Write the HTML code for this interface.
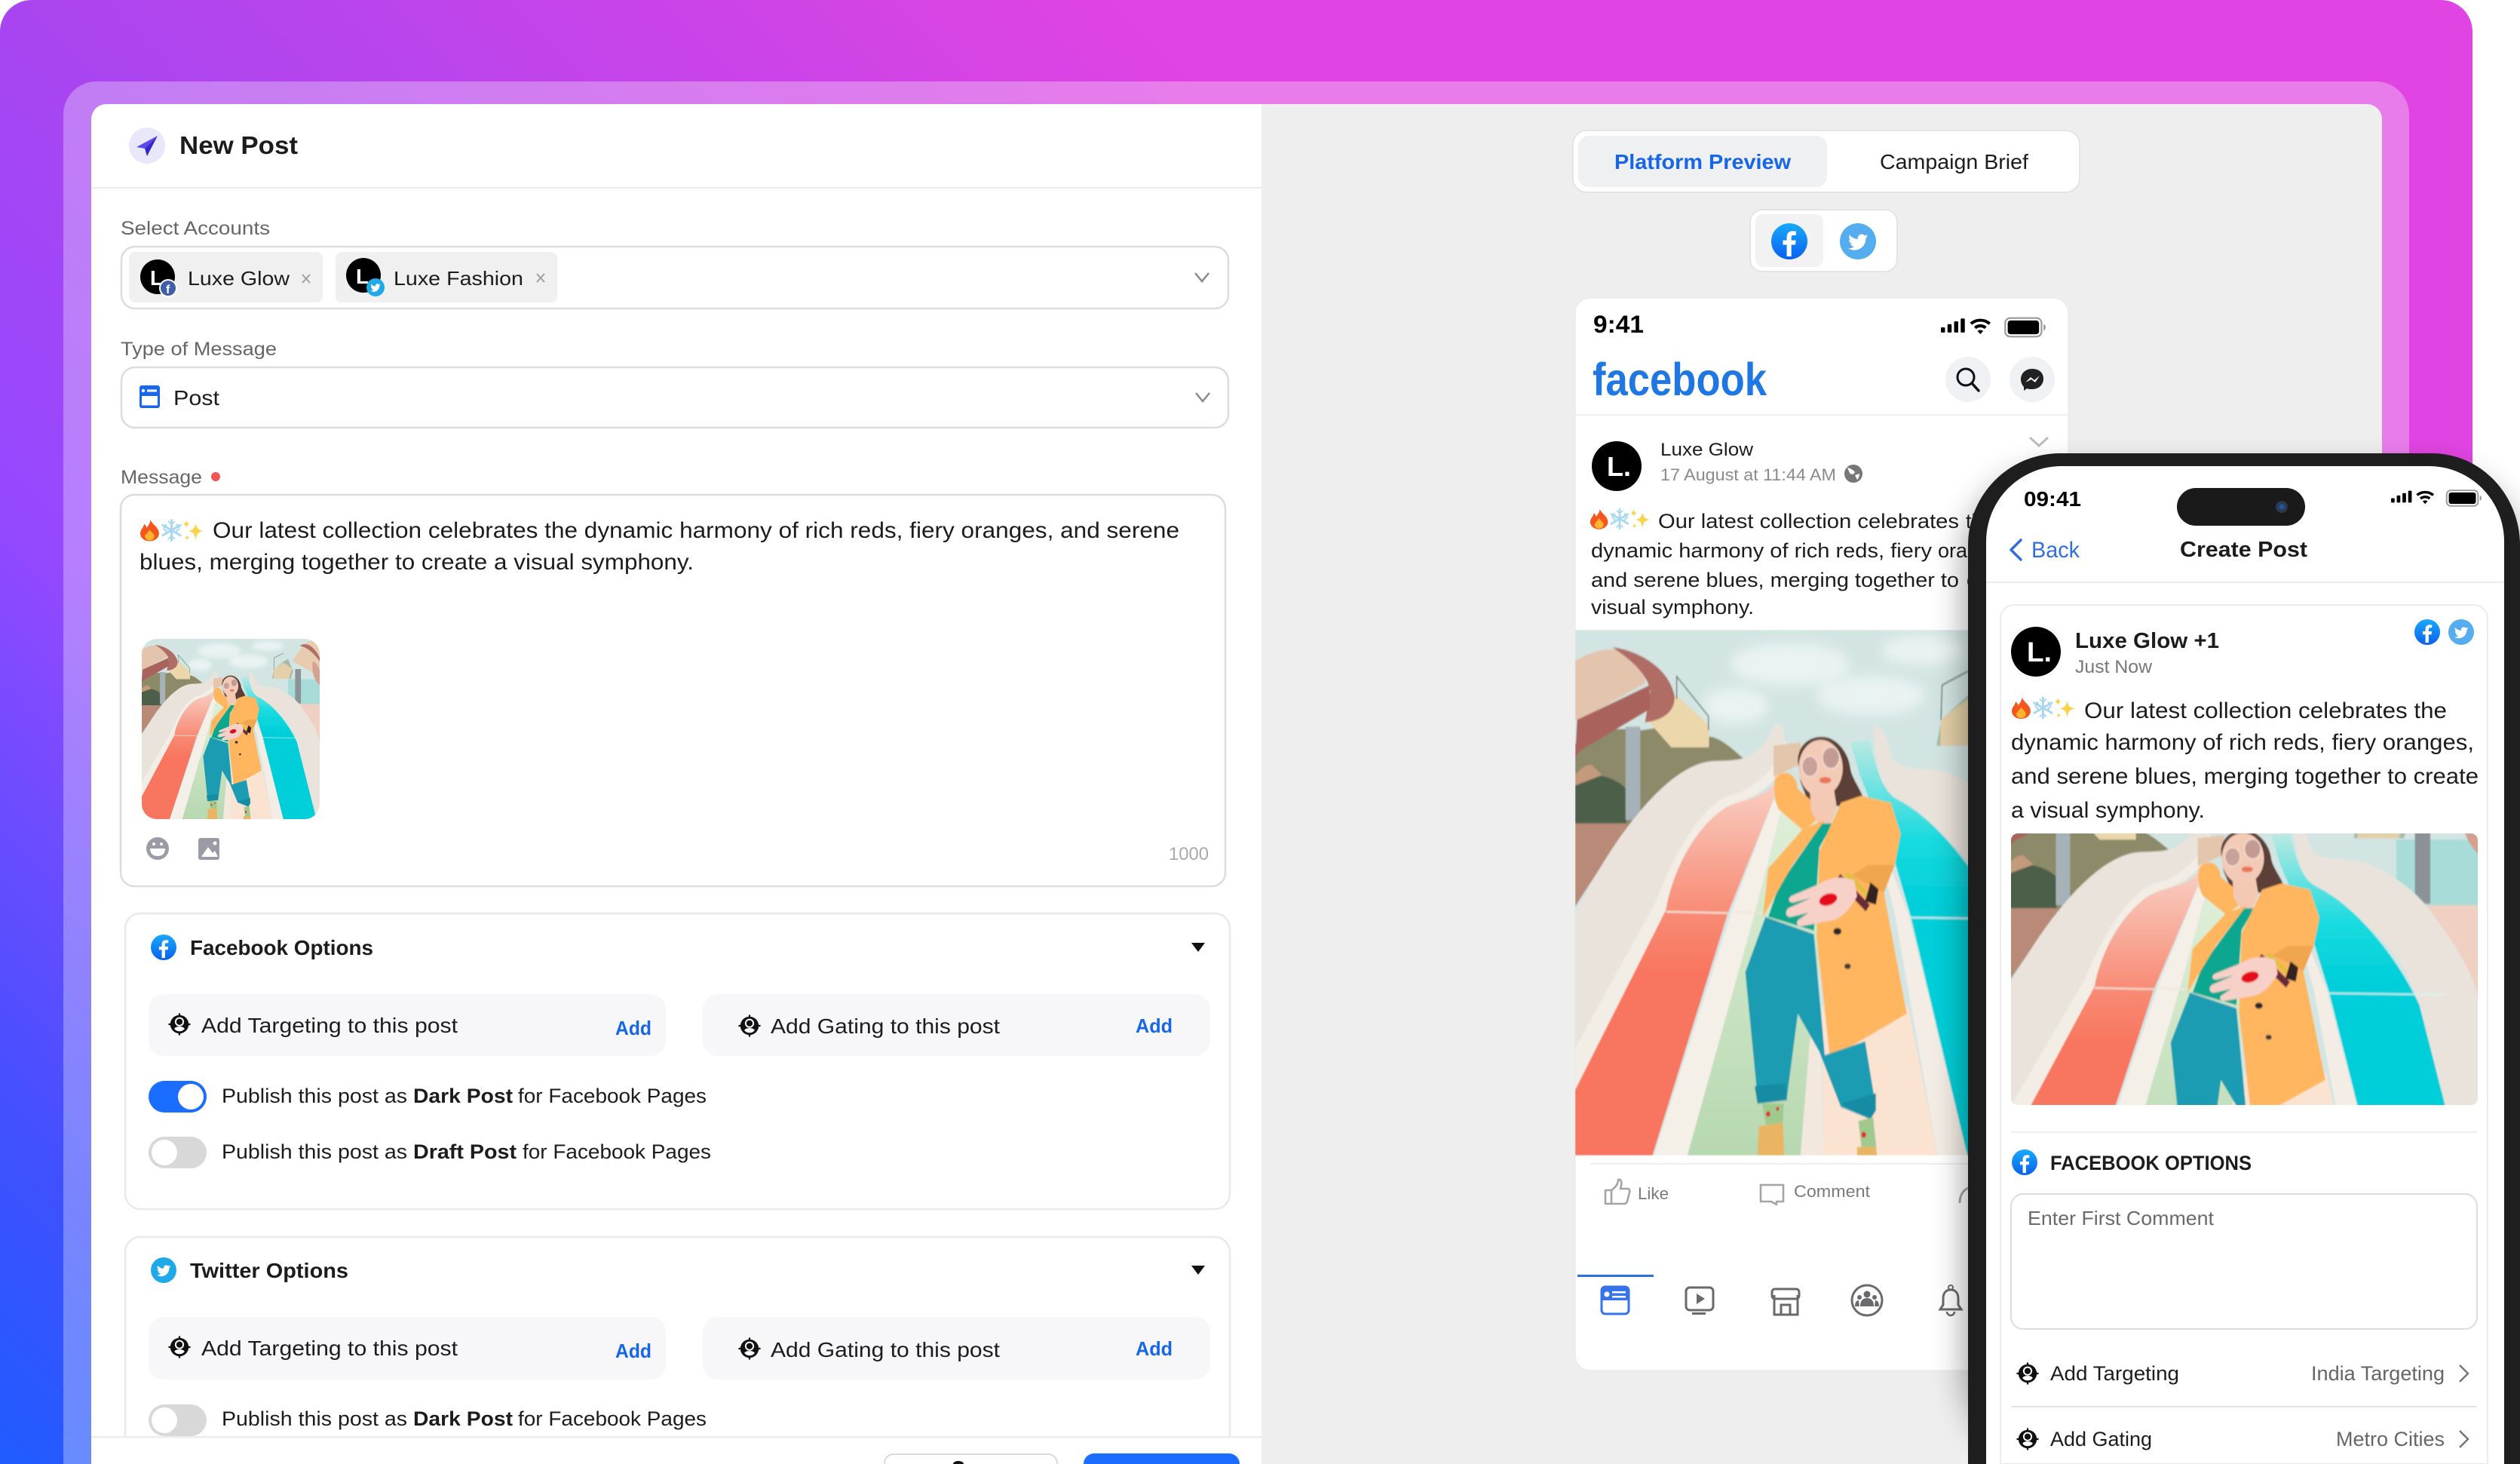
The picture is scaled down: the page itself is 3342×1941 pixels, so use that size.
<!DOCTYPE html>
<html><head><meta charset="utf-8"><title>New Post</title>
<style>html,body{margin:0;padding:0;background:#fff;width:3342px;height:1941px;overflow:hidden}svg{display:block}text{font-family:"Liberation Sans",sans-serif;fill:#1c1c1c;white-space:pre}.b{font-weight:700}</style></head>
<body>
<svg xmlns="http://www.w3.org/2000/svg" width="3342" height="1941" viewBox="0 0 3342 1941">
<defs>
<linearGradient id="bg" gradientUnits="userSpaceOnUse" x1="0" y1="1941" x2="1845" y2="96"><stop offset="0" stop-color="#1f5cff"/><stop offset=".12" stop-color="#3f50ff"/><stop offset=".35" stop-color="#9648ff"/><stop offset=".53" stop-color="#a945f0"/><stop offset=".93" stop-color="#e044e2"/><stop offset="1" stop-color="#e044e2"/></linearGradient>
<linearGradient id="fbg" x1="0" y1="0" x2="0" y2="1"><stop offset="0" stop-color="#19aafc"/><stop offset="1" stop-color="#0a60ee"/></linearGradient>
<linearGradient id="red" gradientUnits="userSpaceOnUse" x1="0" y1="450" x2="0" y2="1000"><stop offset="0" stop-color="#f8cfc3"/><stop offset=".7" stop-color="#f88a74"/><stop offset="1" stop-color="#f8765f"/></linearGradient>
<linearGradient id="blu" gradientUnits="userSpaceOnUse" x1="0" y1="340" x2="0" y2="800"><stop offset="0" stop-color="#b5e8e2"/><stop offset=".6" stop-color="#18dbe0"/><stop offset="1" stop-color="#00cfd9"/></linearGradient>
<linearGradient id="grn" x1="0" y1="0" x2="0" y2="1"><stop offset="0" stop-color="#dff0d8"/><stop offset="1" stop-color="#b7d8b0"/></linearGradient>
<filter id="bl" x="-30%" y="-30%" width="160%" height="160%"><feGaussianBlur stdDeviation="22"/></filter>
<filter id="cl" x="-50%" y="-50%" width="200%" height="200%"><feGaussianBlur stdDeviation="18"/></filter>
<filter id="sf" x="0" y="0" width="100%" height="100%"><feGaussianBlur stdDeviation="2.500"/></filter>
<clipPath id="pc"><rect x="121" y="138" width="3038" height="1803" rx="20"/></clipPath>
<clipPath id="lc"><rect x="121" y="138" width="1552" height="1766"/></clipPath>
<clipPath id="fc"><rect x="2089" y="395" width="654" height="1422" rx="20"/></clipPath>
<clipPath id="th"><rect x="188" y="847" width="236" height="239" rx="20"/></clipPath>
<clipPath id="pi"><rect x="2667" y="1105" width="619" height="360" rx="9"/></clipPath>

<symbol id="fb" viewBox="0 0 24 24"><circle cx="12" cy="12" r="12" fill="url(#fbg)"/><g transform="translate(1.2 2.200) scale(.9)"><path fill="#fff" d="M13.5 22v-8.600h2.900l.43-3.300H13.500V8c0-.95.27-1.600 1.640-1.600h1.750V3.450c-.3-.04-1.340-.13-2.550-.13-2.520 0-4.250 1.540-4.250 4.370v2.410H7.240v3.300h2.850V22z"/></g></symbol>
<symbol id="tw" viewBox="0 0 24 24"><circle cx="12" cy="12" r="12" fill="#1fa9e8"/><g transform="translate(4.6 4.8) scale(.62)"><path fill="#fff" d="M22.46 6c-.77.35-1.6.58-2.46.69.88-.53 1.56-1.37 1.88-2.38-.83.5-1.75.85-2.72 1.05C18.37 4.5 17.26 4 16 4c-2.35 0-4.27 1.92-4.27 4.29 0 .34.04.67.11.98C8.28 9.09 5.11 7.38 3 4.79c-.37.63-.58 1.37-.58 2.15 0 1.49.75 2.81 1.91 3.56-.71 0-1.37-.2-1.95-.5v.03c0 2.08 1.48 3.82 3.44 4.21a4.22 4.22 0 0 1-1.93.07 4.28 4.28 0 0 0 4 2.98 8.521 8.521 0 0 1-5.33 1.84c-.34 0-.68-.02-1.02-.06C3.44 20.29 5.7 21 8.12 21 16 21 20.33 14.46 20.33 8.79c0-.19 0-.37-.01-.56.84-.6 1.56-1.36 2.14-2.23z"/></g></symbol>
<symbol id="tw2" viewBox="0 0 24 24"><circle cx="12" cy="12" r="12" fill="#55acee"/><g transform="translate(4.6 4.8) scale(.62)"><path fill="#fff" d="M22.46 6c-.77.35-1.6.58-2.46.69.88-.53 1.56-1.37 1.88-2.38-.83.5-1.75.85-2.72 1.05C18.37 4.5 17.26 4 16 4c-2.35 0-4.27 1.92-4.27 4.29 0 .34.04.67.11.98C8.28 9.09 5.11 7.38 3 4.79c-.37.63-.58 1.37-.58 2.15 0 1.49.75 2.81 1.91 3.56-.71 0-1.37-.2-1.95-.5v.03c0 2.08 1.48 3.82 3.44 4.21a4.22 4.22 0 0 1-1.93.07 4.28 4.28 0 0 0 4 2.98 8.521 8.521 0 0 1-5.33 1.84c-.34 0-.68-.02-1.02-.06C3.44 20.29 5.7 21 8.12 21 16 21 20.33 14.46 20.33 8.79c0-.19 0-.37-.01-.56.84-.6 1.56-1.36 2.14-2.23z"/></g></symbol>
<symbol id="tgt" viewBox="0 0 32 32"><circle cx="16" cy="16" r="13" fill="#111"/><rect x="14.8" y="0.5" width="2.400" height="4" fill="#111"/><rect x="14.8" y="27.5" width="2.400" height="4" fill="#111"/><rect x="0.5" y="14.8" width="4" height="2.400" fill="#111"/><rect x="27.5" y="14.8" width="4" height="2.400" fill="#111"/><circle cx="16" cy="12.500" r="6.500" fill="#fff"/><circle cx="16" cy="12.500" r="4.400" fill="#111"/><path fill="#fff" d="M8.600 22.200C10.500 19.900 13 19.300 16 19.300s5.500.6 7.400 2.900C21.500 24.600 19 25.900 16 25.900s-5.500-1.300-7.400-3.700z"/></symbol>
<symbol id="emo" viewBox="0 0 84 28">
<path fill="#f4561d" d="M14 0c1 6 11 10 11 18 0 6-5.500 10-12 10S1 24 1 18c0-5 4-7 5-12 2 2 3 3 3 5 2-3 5-6 5-11z"/><path fill="#fdb52e" d="M13 13c1 3 6 5 6 9 0 3-2.500 5-6 5s-6-2-6-5c0-3 4-5 6-9z"/>
<g stroke="#a9d7f0" stroke-width="2.800" stroke-linecap="round" fill="none"><path d="M41 1v26M29.700 7.500l22.600 13M29.700 20.500l22.600-13"/><path d="M37 3l4 3.500 4-3.500M37 25l4-3.500 4 3.500M31 13l3.500 1-1 4.500M51 13l-3.500 1 1 4.500M31 11l3.500-1-1-3.500M51 11l-3.500-1 1-3.500" stroke-width="1.800"/></g>
<g fill="#fbd24a"><path d="M72 5c1 6 3 9 10 10-7 1-9 4-10 12-1-8-3-11-10-12 7-1 9-4 10-10z"/><path d="M60 1c.5 3 1.500 4 4 5-2.500 1-3.500 2-4 5-.5-3-1.500-4-4-5 2.500-1 3.500-2 4-5z"/><path d="M61 20c.4 2 1 3 3 3.500-2 .5-2.600 1.500-3 3.500-.4-2-1-3-3-3.500 2-.5 2.600-1.500 3-3.500z"/></g>
</symbol>
<symbol id="sig" viewBox="0 0 128 30" preserveAspectRatio="none"><g fill="#000"><rect x="0" y="15" width="5" height="6.500" rx="1.200"/><rect x="8" y="11" width="5" height="10.500" rx="1.200"/><rect x="16" y="7.500" width="5" height="14" rx="1.200"/><rect x="24" y="4" width="5" height="17.500" rx="1.200"/><g transform="translate(34.800 -1.300) scale(.93)"><path d="M14 6C8.500 6 4 8 .5 11.200l2.600 3C6 11.700 9.700 10 14 10s8 1.700 10.900 4.200l2.600-3C24 8 19.500 6 14 6zM14 13.500c-3.300 0-6.200 1.200-8.300 3.200l2.700 3c1.500-1.300 3.400-2.100 5.600-2.100s4.100.8 5.600 2.100l2.700-3c-2.100-2-5-3.200-8.300-3.200zM14 21c-1.500 0-2.800.6-3.700 1.500l3.700 4.100 3.700-4.100c-.9-.9-2.200-1.500-3.700-1.500z"/></g><rect x="78" y="3.500" width="44" height="23" rx="6" fill="#fff" stroke="#999" stroke-width="2"/><rect x="81" y="6.500" width="38" height="17" rx="3.500"/><path d="M124.500 11c1.500.5 2.500 2 2.500 4s-1 3.500-2.500 4z" fill="#999"/></g></symbol>

<g id="scene"><g filter="url(#sf)">
<rect x="53" y="10" width="1832" height="1520" fill="#d3e5e3"/>
<g filter="url(#cl)" fill="#eef6f4" opacity=".85"><ellipse cx="850" cy="110" rx="220" ry="60"/><ellipse cx="1150" cy="200" rx="200" ry="55"/><ellipse cx="650" cy="230" rx="120" ry="50"/><ellipse cx="1350" cy="70" rx="160" ry="40"/></g>
<path fill="#8c8a68" d="M53 340C120 300 220 290 300 300c90-10 170-20 230 20 50-10 100 30 160 70L420 560 240 600H53z"/>
<path fill="#4c5f48" d="M53 440c60-20 140-10 190 30v100H53z"/>
<path fill="#c49a7c" d="M53 430c20-20 40-30 60-30l40 30-100 30z"/>
<path fill="#b98a78" d="M53 570h200l-200 240z"/>
<rect x="240" y="290" width="55" height="270" fill="#a7b1b8"/>
<path fill="#ecd7ad" d="M320 270l110-70 120 85v65H410z"/>
<path fill="#e3c5ae" d="M53 100c80-40 170-45 240-10 20 20 20 60 20 75L70 270H53z"/>
<path fill="#b06d66" d="M190 60c100 10 210 60 232 140 4 40-30 70-110 78l20-90c-10-50-70-90-142-128z"/>
<path fill="#a9635c" d="M60 270l270-100v70L70 360l-17 20z"/>
<path fill="none" stroke="#5a7a6a" stroke-width="4" d="M430 210V145l118 115v40"/>
<path fill="#a9bba6" d="M1395 345l18-75 99-70 48-20 50 100-20 65z"/>
<path fill="#e4d0a8" d="M1410 270l100-60 90 50-30 85h-160z"/>
<path fill="none" stroke="#5a6a6a" stroke-width="4" d="M1412 270l4-100 96-40"/>
<path fill="#a8dcd8" d="M1560 350h325v240h-325z"/>
<path fill="#e9ccb0" d="M1605 200c60-90 130-170 200-175 50 0 80 10 80 30v280c-70-40-190-100-280-135z"/>
<path fill="#b07068" d="M1700 60c70-20 140 30 185 110v30c-60-70-130-120-205-130z"/>
<rect x="1632" y="265" width="60" height="290" fill="#8b9398"/>
<path fill="#d4a090" d="M1815 200c30 10 60 40 70 80v120c-50-30-90-110-70-200z"/>
<path fill="#f0d0c2" d="M1640 560h245v360l-120-150z"/>
<path fill="#e9e3db" d="M53 830C200 600 400 400 560 390c90-5 170 10 230-100 20-20 40 0 40 40-30 90-130 150-210 160-120 40-220 210-270 310L53 1220z"/>
<path fill="#f2ede5" d="M53 1220l297-420c50-100 150-270 270-310 80-10 180-70 210-160l20 20c-30 90-90 130-190 160-120 50-190 230-220 330L53 1340z"/>
<path fill="url(#red)" d="M800 445c-50 60-130 50-200 85-110 60-190 190-210 290L53 1340v190h287L620 830l170-330z"/>
<path fill="#f4efe7" d="M790 500 640 810 345 1530h125L720 830l100-300z"/>
<path fill="url(#grn)" d="M830 510l-110 320-250 700h440l30-350L1000 500z"/>
<path fill="#f3e8dd" d="M890 1530h85l-10-360-40 20z"/>
<path fill="#fbe3d2" d="M975 1530h425L1290 1100H970z"/>
<path fill="#e9e3db" d="M1160 290c40-10 50 40 70 90 40 50 150 20 230 50 100 40 190 90 260 180 80 90 165 200 165 300v570l-34 50-201-650c-60-150-150-260-400-340-50-40-80-130-90-250z"/>
<path fill="url(#blu)" d="M1075 335l75-5c20 90 50 150 100 170 150 60 310 220 400 380l201 650h-341L1300 840l-60-160-130-250z"/>
<path fill="none" stroke="#d9f5f3" stroke-width="4" d="M1295 842l450 5"/>
<path fill="#f3ede5" d="M1225 700l65 130 220 700h-110L1240 830l-30-90z"/>
<path fill="none" stroke="#efe6dc" stroke-width="5" d="M390 825l230 4M640 825l120 5"/>
<path fill="#e3c6ab" d="M790 345l100-10 10 60-110 40z"/>
<path fill="#5b4038" d="M880 390c0-50 50-75 100-70 50 5 90 50 95 90 5 30 40 60 55 100l-100 10-110-10-30-60z"/>
<path fill="#ffb65f" d="M795 440c30-30 80-20 85 30l105 70-85 50-90-60c-20-30-20-60-15-90z"/>
<path fill="#f3c9b4" d="M925 480l90-5 10 50-25 50h-40l-30-40z"/>
<ellipse cx="965" cy="410" rx="82" ry="82" fill="#f3cab6"/>
<circle cx="925" cy="405" r="30" fill="#c9a09a" stroke="#f0dccc" stroke-width="5"/><circle cx="1003" cy="380" r="32" fill="#c49a95" stroke="#f0dccc" stroke-width="5"/>
<ellipse cx="982" cy="445" rx="22" ry="9" fill="#e8735a"/>
<path fill="#0aa68f" d="M970 570h40l-50 70-20 240-170-40 40-90z"/>
<path fill="#ffb65f" d="M900 585l80-25-120 130-80 110-30 40 20-140z"/>
<path fill="#ffb65f" d="M1115 490l110 20 37 90-22 90-40 80 85 350-285 130-50-350 10-250 80-140z"/>
<path fill="#f0a550" d="M1240 690l-40 80-120-50 60-30z"/>
<path fill="#1a9cb2" d="M760 840l180 50 40 350 150-40 40 190-20 35-110-35-80-160-80-110-40 240H730l-45-360z"/>
<path fill="#148ca3" d="M720 1330l115-10 5 50-110 10zM1040 1380l130-30v50l-20 25z"/>
<path fill="#a0c98e" d="M748 1380h80l-5 70h-60zM1105 1430l55-10 12 90h-55z"/>
<circle cx="770" cy="1410" r="8" fill="#d33"/><circle cx="1125" cy="1470" r="9" fill="#d33"/><circle cx="805" cy="1395" r="6" fill="#d33"/>
<path fill="#e9b563" d="M735 1445l90-10 5 95h-100zM1100 1505h70l5 25h-75z"/>
<path fill="none" stroke="#6a2a3a" stroke-width="24" d="M1030 725l110 90"/>
<path fill="none" stroke="#e0c040" stroke-width="14" d="M1060 715l90 70"/>
<path fill="#302224" d="M1150 740l30 20-10 45-40-10z"/>
<path fill="#f7d0c8" d="M1090 735C1040 720 1000 725 960 745L855 780c-15 10-7 20 10 18l65-13-85 30c-15 10-10 27 10 25l65-12-40 22c-10 12 5 20 20 16l110-16c40-10 70-40 90-70z"/>
<ellipse cx="993" cy="790" rx="34" ry="17" fill="#e5101c" transform="rotate(-12 993 790)"/>
<ellipse cx="1027" cy="882" rx="15" ry="10" fill="#2c2c2c"/><ellipse cx="1065" cy="983" rx="12" ry="8" fill="#3c3c3c"/>
</g></g>
</defs>

<rect width="3342" height="1941" fill="#fff"/>
<path d="M0 42a42 42 0 0 1 42-42H3237a42 42 0 0 1 42 42V1941H0Z" fill="url(#bg)"/>
<path d="M84 152a44 44 0 0 1 44-44H3151a44 44 0 0 1 44 44V1941H84Z" fill="#fff" opacity=".3"/>

<g clip-path="url(#pc)">
<rect x="121" y="138" width="1552" height="1803" fill="#fff"/>
<rect x="1673" y="138" width="1486" height="1803" fill="#eee"/>
</g>

<!-- New Post header -->
<circle cx="195" cy="193" r="24" fill="#e8e8fa"/>
<path d="M209 180 181 195l11 2z" fill="#5a48f0"/><path d="M209 180 192 197l3 10z" fill="#3826c8"/>
<text class="b" x="238" y="204" font-size="33" textLength="157" lengthAdjust="spacingAndGlyphs">New Post</text>
<rect x="121" y="248" width="1552" height="2" fill="#ebebeb"/>

<text x="160" y="311" font-size="25" textLength="198" lengthAdjust="spacingAndGlyphs" style="fill:#666">Select Accounts</text>
<rect x="161" y="327" width="1468" height="82" rx="18" fill="#fff" stroke="#dcdcdc" stroke-width="2.500"/>
<rect x="171" y="334" width="257" height="67" rx="8" fill="#f0f0f0"/>
<rect x="445" y="334" width="294" height="67" rx="8" fill="#f0f0f0"/>
<circle cx="209" cy="367" r="23" fill="#000"/><text class="b" x="199" y="378" font-size="28" style="fill:#fff">L</text>
<circle cx="223" cy="382" r="12" fill="#fff"/><circle cx="223" cy="382" r="10" fill="#3f5da8"/><text class="b" x="220" y="389" font-size="16" style="fill:#fff">f</text>
<text x="249" y="378" font-size="26" textLength="135" lengthAdjust="spacingAndGlyphs">Luxe Glow</text>
<path d="M401 364l10 11M411 364l-10 11" stroke="#a0a0a0" stroke-width="2" fill="none"/>
<circle cx="482" cy="365" r="23" fill="#000"/><text class="b" x="472" y="376" font-size="28" style="fill:#fff">L</text>
<use href="#tw" x="486" y="369" width="24" height="24"/>
<text x="522" y="378" font-size="26" textLength="172" lengthAdjust="spacingAndGlyphs">Luxe Fashion</text>
<path d="M712 363l10 11M722 363l-10 11" stroke="#a0a0a0" stroke-width="2" fill="none"/>
<path d="M1585 362l9 11 9-11" stroke="#8a8a8a" stroke-width="2.500" fill="none"/>

<text x="160" y="471" font-size="25" textLength="207" lengthAdjust="spacingAndGlyphs" style="fill:#666">Type of Message</text>
<rect x="161" y="487" width="1468" height="80" rx="18" fill="#fff" stroke="#dcdcdc" stroke-width="2.500"/>
<rect x="185" y="511" width="27" height="30" rx="3" fill="#1766ee"/><rect x="188" y="525" width="21" height="12.500" fill="#fff"/><circle cx="190" cy="518" r="2.200" fill="#fff"/><rect x="195" y="516.500" width="13" height="3" fill="#fff"/>
<text x="230" y="537" font-size="28" textLength="61" lengthAdjust="spacingAndGlyphs">Post</text>
<path d="M1586 521l9 11 9-11" stroke="#8a8a8a" stroke-width="2.500" fill="none"/>

<text x="160" y="641" font-size="25" textLength="108" lengthAdjust="spacingAndGlyphs" style="fill:#666">Message</text>
<circle cx="286" cy="632" r="6" fill="#f25555"/>
<rect x="160" y="656" width="1465" height="519" rx="18" fill="#fff" stroke="#dcdcdc" stroke-width="2.500"/>
<use href="#emo" x="185" y="688" width="87" height="30"/>
<text x="282" y="713" font-size="30" textLength="1282" lengthAdjust="spacingAndGlyphs">Our latest collection celebrates the dynamic harmony of rich reds, fiery oranges, and serene</text>
<text x="185" y="755" font-size="30" textLength="735" lengthAdjust="spacingAndGlyphs">blues, merging together to create a visual symphony.</text>
<g clip-path="url(#th)"><svg x="188" y="847" width="236" height="239" viewBox="53 10 1832 1520" preserveAspectRatio="none"><use href="#scene"/></svg></g>
<circle cx="209" cy="1125" r="15" fill="#9b9ba6"/><circle cx="204" cy="1119" r="2" fill="#fff"/><circle cx="214" cy="1119" r="2" fill="#fff"/><path d="M199 1125h20c0 7-4 10-10 10s-10-3-10-10z" fill="#fff"/>
<rect x="263" y="1111" width="28" height="29" rx="3" fill="#9b9ba6"/><path d="M267 1136l9-13 6 8 3-3 4 8z" fill="#fff"/><circle cx="285" cy="1118" r="2.500" fill="#fff"/>
<text x="1550" y="1140" font-size="24" textLength="53" lengthAdjust="spacingAndGlyphs" style="fill:#a9a9a9">1000</text>

<g clip-path="url(#lc)">
<!-- Facebook options -->
<rect x="166" y="1211" width="1465" height="392" rx="20" fill="#fff" stroke="#e9e9e9" stroke-width="2.500"/>
<use href="#fb" x="200" y="1239" width="34" height="34"/>
<text class="b" x="252" y="1266" font-size="28" textLength="243" lengthAdjust="spacingAndGlyphs">Facebook Options</text>
<path d="M1580 1250h18l-9 12z" fill="#111"/>
<rect x="197" y="1318" width="686" height="82" rx="20" fill="#f7f7f9"/>
<rect x="932" y="1318" width="673" height="82" rx="20" fill="#f7f7f9"/>
<use href="#tgt" x="223" y="1343" width="30" height="30"/>
<text x="267" y="1369" font-size="28" textLength="340" lengthAdjust="spacingAndGlyphs">Add Targeting to this post</text>
<text class="b" x="816" y="1372" font-size="26" textLength="48" lengthAdjust="spacingAndGlyphs" style="fill:#1766e8">Add</text>
<use href="#tgt" x="979" y="1345" width="30" height="30"/>
<text x="1022" y="1370" font-size="28" textLength="304" lengthAdjust="spacingAndGlyphs">Add Gating to this post</text>
<text class="b" x="1506" y="1369" font-size="26" textLength="49" lengthAdjust="spacingAndGlyphs" style="fill:#1766e8">Add</text>
<rect x="197" y="1433" width="77" height="42" rx="21" fill="#1a6dff"/><circle cx="253" cy="1454" r="17" fill="#fff"/>
<text x="294" y="1462" font-size="27" textLength="246" lengthAdjust="spacingAndGlyphs">Publish this post as</text>
<text class="b" x="548" y="1462" font-size="27" textLength="132" lengthAdjust="spacingAndGlyphs">Dark Post</text>
<text x="687" y="1462" font-size="27" textLength="250" lengthAdjust="spacingAndGlyphs">for Facebook Pages</text>
<rect x="197" y="1507" width="77" height="42" rx="21" fill="#d8d8d8"/><circle cx="218" cy="1528" r="17" fill="#fff"/>
<text x="294" y="1536" font-size="27" textLength="246" lengthAdjust="spacingAndGlyphs">Publish this post as</text>
<text class="b" x="548" y="1536" font-size="27" textLength="137" lengthAdjust="spacingAndGlyphs">Draft Post</text>
<text x="693" y="1536" font-size="27" textLength="250" lengthAdjust="spacingAndGlyphs">for Facebook Pages</text>
<!-- Twitter options -->
<rect x="166" y="1640" width="1465" height="300" rx="20" fill="#fff" stroke="#e9e9e9" stroke-width="2.500"/>
<use href="#tw" x="200" y="1667" width="34" height="34"/>
<text class="b" x="252" y="1694" font-size="28" textLength="210" lengthAdjust="spacingAndGlyphs">Twitter Options</text>
<path d="M1580 1678h18l-9 12z" fill="#111"/>
<rect x="197" y="1746" width="686" height="83" rx="20" fill="#f7f7f9"/>
<rect x="932" y="1746" width="673" height="83" rx="20" fill="#f7f7f9"/>
<use href="#tgt" x="223" y="1771" width="30" height="30"/>
<text x="267" y="1797" font-size="28" textLength="340" lengthAdjust="spacingAndGlyphs">Add Targeting to this post</text>
<text class="b" x="816" y="1800" font-size="26" textLength="48" lengthAdjust="spacingAndGlyphs" style="fill:#1766e8">Add</text>
<use href="#tgt" x="979" y="1773" width="30" height="30"/>
<text x="1022" y="1799" font-size="28" textLength="304" lengthAdjust="spacingAndGlyphs">Add Gating to this post</text>
<text class="b" x="1506" y="1797" font-size="26" textLength="49" lengthAdjust="spacingAndGlyphs" style="fill:#1766e8">Add</text>
<rect x="197" y="1862" width="77" height="42" rx="21" fill="#d8d8d8"/><circle cx="218" cy="1883" r="17" fill="#fff"/>
<text x="294" y="1890" font-size="27" textLength="246" lengthAdjust="spacingAndGlyphs">Publish this post as</text>
<text class="b" x="548" y="1890" font-size="27" textLength="132" lengthAdjust="spacingAndGlyphs">Dark Post</text>
<text x="687" y="1890" font-size="27" textLength="250" lengthAdjust="spacingAndGlyphs">for Facebook Pages</text>
</g>
<rect x="121" y="1904" width="1552" height="37" fill="#fff"/><rect x="121" y="1904" width="1552" height="2.500" fill="#ececec"/>
<path d="M1173 1941V1940a12 12 0 0 1 12-12H1390a12 12 0 0 1 12 12V1941" fill="#fff" stroke="#dadada" stroke-width="2"/><path d="M1264 1941a7 4 0 0 1 14 0Z" fill="#111"/>
<path d="M1437 1941a14 14 0 0 1 14-14H1630a14 14 0 0 1 14 14Z" fill="#1a6dff"/>

<!-- Right tabs -->
<rect x="2086" y="173" width="672" height="82" rx="18" fill="#fff" stroke="#e4e4e4" stroke-width="2"/>
<rect x="2093" y="180" width="330" height="68" rx="14" fill="#eef0f2"/>
<text class="b" x="2141" y="224" font-size="28" textLength="234" lengthAdjust="spacingAndGlyphs" style="fill:#1766e8">Platform Preview</text>
<text x="2493" y="224" font-size="28" textLength="197" lengthAdjust="spacingAndGlyphs">Campaign Brief</text>
<rect x="2321" y="278" width="195" height="82" rx="16" fill="#fff" stroke="#e4e4e4" stroke-width="2"/>
<rect x="2328" y="284" width="90" height="70" rx="10" fill="#f2f2f2"/>
<use href="#fb" x="2349" y="296" width="48" height="48"/>
<use href="#tw2" x="2440" y="296" width="48" height="48"/>

<!-- FB preview card -->
<rect x="2089" y="395" width="654" height="1422" rx="20" fill="#fff" stroke="#e6e6e6" stroke-width="1"/>
<g clip-path="url(#fc)">
<text class="b" x="2113" y="441" font-size="32" textLength="67" lengthAdjust="spacingAndGlyphs" style="fill:#000">9:41</text>
<use href="#sig" x="2574" y="418" width="140" height="32"/>
<text class="b" x="2112" y="524" font-size="61" textLength="231" lengthAdjust="spacingAndGlyphs" style="fill:#1e77e2">facebook</text>
<circle cx="2610" cy="503" r="30" fill="#f0f1f4"/><circle cx="2607" cy="500" r="11" fill="none" stroke="#111" stroke-width="3"/><path d="M2615 508l9 10" stroke="#111" stroke-width="3.500" stroke-linecap="round"/>
<circle cx="2695" cy="503" r="30" fill="#f0f1f4"/><path d="M2695 489c-9 0-15 6-15 14 0 4 2 8 4 10v5l4-3c2 1 4 1 7 1 9 0 15-6 15-14s-6-13-15-13z" fill="#222"/><path d="M2686 507l7-7 5 4 7-6-6 9-5-4z" fill="#fff"/>
<rect x="2089" y="549" width="654" height="2" fill="#eeeff5"/>
<circle cx="2144" cy="618" r="33" fill="#000"/><text class="b" x="2131" y="631" font-size="36" style="fill:#fff">L.</text>
<text x="2202" y="604" font-size="24" textLength="123" lengthAdjust="spacingAndGlyphs">Luxe Glow</text>
<text x="2202" y="637" font-size="22" textLength="233" lengthAdjust="spacingAndGlyphs" style="fill:#8a8a8a">17 August at 11:44 AM</text>
<circle cx="2458" cy="628" r="12" fill="#777"/><path d="M2450 620c4 1 8 3 10 6-1 3-5 4-7 1zM2460 630l6-2c0 3-1 6-3 8z" fill="#fff"/>
<path d="M2692 580l12 11 12-11" stroke="#bdbdbd" stroke-width="3" fill="none"/>
<use href="#emo" x="2108" y="674" width="82" height="28"/>
<text x="2199" y="700" font-size="27" textLength="399" lengthAdjust="spacingAndGlyphs">Our latest collection celebrates</text>
<text x="2607" y="700" font-size="27">the</text>
<text x="2110" y="739" font-size="27" textLength="452" lengthAdjust="spacingAndGlyphs">dynamic harmony of rich reds, fiery</text>
<text x="2570" y="739" font-size="27">oranges,</text>
<text x="2110" y="778" font-size="27" textLength="488" lengthAdjust="spacingAndGlyphs">and serene blues, merging together to</text>
<text x="2608" y="778" font-size="27">create a</text>
<text x="2110" y="814" font-size="27" textLength="216" lengthAdjust="spacingAndGlyphs">visual symphony.</text>
<svg x="2089" y="835" width="654" height="697" viewBox="53 10 1832 1520" preserveAspectRatio="none"><use href="#scene"/></svg>
<rect x="2108" y="1542" width="635" height="2" fill="#f0f0f0"/>
<path d="M2129 1578h8v18h-8zM2137 1578c6-4 9-9 9-14 4-1 5 4 4 8l-1 4h9c3 0 4 3 3 5l-3 12c-1 2-2 3-4 3h-17z" fill="none" stroke="#a4a4a6" stroke-width="2.600" stroke-linejoin="round"/>
<text x="2172" y="1590" font-size="22" textLength="41" lengthAdjust="spacingAndGlyphs" style="fill:#7a7a7a">Like</text>
<path d="M2335 1571h30v22h-9v4l-7-4h-14z" fill="none" stroke="#a4a4a6" stroke-width="2.600" stroke-linejoin="round"/>
<text x="2379" y="1587" font-size="22" textLength="101" lengthAdjust="spacingAndGlyphs" style="fill:#7a7a7a">Comment</text>
<path d="M2599 1595c0-12 6-20 18-22" fill="none" stroke="#a4a4a6" stroke-width="3"/>
<rect x="2092" y="1690" width="101" height="3" fill="#2f6fe6"/>
<rect x="2124" y="1706" width="36" height="36" rx="5" fill="#fff" stroke="#3772e8" stroke-width="3"/><path d="M2124 1711a5 5 0 0 1 5-5h26a5 5 0 0 1 5 5v13h-36z" fill="#3772e8"/><circle cx="2131" cy="1716" r="3.500" fill="#fff"/><rect x="2138" y="1712" width="18" height="2.500" fill="#fff"/><rect x="2138" y="1718" width="18" height="2.500" fill="#fff"/>
<rect x="2236" y="1707" width="36" height="30" rx="5" fill="none" stroke="#6a6a6e" stroke-width="3"/><path d="M2250 1715l11 7-11 7z" fill="#6a6a6e"/><rect x="2244" y="1740" width="18" height="3" fill="#6a6a6e"/>
<path d="M2353 1717v26h31v-26" fill="none" stroke="#6a6a6e" stroke-width="3"/><rect x="2350" y="1709" width="36" height="13" rx="4" fill="none" stroke="#6a6a6e" stroke-width="3"/><rect x="2362" y="1730" width="12" height="13" fill="none" stroke="#6a6a6e" stroke-width="3"/>
<circle cx="2476" cy="1724" r="20" fill="none" stroke="#6a6a6e" stroke-width="3"/><circle cx="2476" cy="1716" r="4.500" fill="#6a6a6e"/><circle cx="2466" cy="1720" r="3" fill="#6a6a6e"/><circle cx="2486" cy="1720" r="3" fill="#6a6a6e"/><path d="M2467 1732c0-8 4-11 9-11s9 3 9 11z" fill="#6a6a6e"/><path d="M2460 1732c0-5 2-8 5-8l1 8zM2492 1732c0-5-2-8-5-8l-1 8z" fill="#6a6a6e"/>
<path d="M2587 1710c-7 0-10 5-10 12v8l-4 6h28l-4-6v-8c0-7-3-12-10-12z" fill="none" stroke="#6a6a6e" stroke-width="3"/><circle cx="2587" cy="1707" r="3" fill="none" stroke="#6a6a6e" stroke-width="2"/><path d="M2582 1739a5 5 0 0 0 10 0" fill="none" stroke="#6a6a6e" stroke-width="2.500"/>
</g>

<!-- Phone -->
<rect x="2606" y="625" width="736" height="1316" rx="120" fill="#000" opacity=".38" filter="url(#bl)"/>
<path d="M2610 723a122 122 0 0 1 122-122H3225a117 122 0 0 1 117 122V1941H2610Z" fill="#1e1e1e"/>
<path d="M2634 718a100 100 0 0 1 100-100H3221a100 100 0 0 1 100 100V1941H2634Z" fill="#fff"/>
<text class="b" x="2684" y="671" font-size="28" textLength="76" lengthAdjust="spacingAndGlyphs" style="fill:#000">09:41</text>
<rect x="2887" y="647" width="170" height="50" rx="25" fill="#1a1a1a"/><circle cx="3026" cy="672" r="8" fill="#2b3a4a"/><circle cx="3026" cy="672" r="3.500" fill="#1a55a8"/>
<use href="#sig" x="3171" y="647" width="121" height="27"/>
<path d="M2680 716l-13 13 13 13" fill="none" stroke="#2f6fdf" stroke-width="3.500" stroke-linecap="round" stroke-linejoin="round"/>
<text x="2694" y="739" font-size="30" textLength="64" lengthAdjust="spacingAndGlyphs" style="fill:#2f6fdf">Back</text>
<text class="b" x="2891" y="738" font-size="29" textLength="169" lengthAdjust="spacingAndGlyphs">Create Post</text>
<rect x="2634" y="771" width="687" height="2" fill="#ececec"/>
<path d="M2653 820a18 18 0 0 1 18-18H3281a18 18 0 0 1 18 18V1941H2653Z" fill="#fff" stroke="#ebebeb" stroke-width="2"/>
<circle cx="2700" cy="864" r="33" fill="#000"/><text class="b" x="2688" y="877" font-size="37" style="fill:#fff">L.</text>
<text class="b" x="2752" y="859" font-size="29" textLength="191" lengthAdjust="spacingAndGlyphs">Luxe Glow +1</text>
<text x="2752" y="892" font-size="24" textLength="102" lengthAdjust="spacingAndGlyphs" style="fill:#777">Just Now</text>
<use href="#fb" x="3202" y="821" width="34" height="34"/>
<use href="#tw2" x="3247" y="821" width="34" height="34"/>
<use href="#emo" x="2667" y="923" width="87" height="31"/>
<text x="2764" y="952" font-size="30" textLength="481" lengthAdjust="spacingAndGlyphs">Our latest collection celebrates the</text>
<text x="2667" y="994" font-size="30" textLength="614" lengthAdjust="spacingAndGlyphs">dynamic harmony of rich reds, fiery oranges,</text>
<text x="2667" y="1039" font-size="30" textLength="620" lengthAdjust="spacingAndGlyphs">and serene blues, merging together to create</text>
<text x="2667" y="1084" font-size="30" textLength="257" lengthAdjust="spacingAndGlyphs">a visual symphony.</text>
<g clip-path="url(#pi)"><svg x="2667" y="1105" width="619" height="360" viewBox="66 330 1810 870" preserveAspectRatio="none"><use href="#scene"/></svg></g>
<rect x="2667" y="1500" width="618" height="2" fill="#eee"/>
<use href="#fb" x="2668" y="1524" width="34" height="34"/>
<text class="b" x="2719" y="1551" font-size="27" textLength="267" lengthAdjust="spacingAndGlyphs">FACEBOOK OPTIONS</text>
<rect x="2667" y="1583" width="618" height="179" rx="16" fill="#fff" stroke="#dcdcdc" stroke-width="2"/>
<text x="2689" y="1624" font-size="26" textLength="247" lengthAdjust="spacingAndGlyphs" style="fill:#6a6a6a">Enter First Comment</text>
<use href="#tgt" x="2674" y="1806" width="30" height="30"/>
<text x="2719" y="1830" font-size="27" textLength="171" lengthAdjust="spacingAndGlyphs">Add Targeting</text>
<text x="3065" y="1830" font-size="27" textLength="177" lengthAdjust="spacingAndGlyphs" style="fill:#666">India Targeting</text>
<path d="M3262 1810l11 11-11 11" fill="none" stroke="#777" stroke-width="2.500"/>
<rect x="2667" y="1864" width="618" height="2" fill="#e4e4e4"/>
<use href="#tgt" x="2674" y="1893" width="30" height="30"/>
<text x="2719" y="1917" font-size="27" textLength="135" lengthAdjust="spacingAndGlyphs">Add Gating</text>
<text x="3098" y="1917" font-size="27" textLength="144" lengthAdjust="spacingAndGlyphs" style="fill:#666">Metro Cities</text>
<path d="M3262 1897l11 11-11 11" fill="none" stroke="#777" stroke-width="2.500"/>
</svg>
</body></html>
